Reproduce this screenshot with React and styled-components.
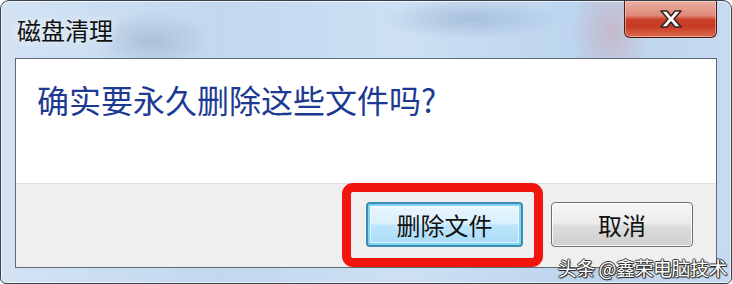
import styled, { createGlobalStyle } from "styled-components";

const GlobalStyle = createGlobalStyle`
  html, body {
    margin: 0;
    padding: 0;
    background: #ffffff;
  }
  body {
    font-family: "Noto Sans CJK SC", "Noto Sans", sans-serif;
  }
`;

const Window = styled.div`
  position: relative;
  width: 732px;
  height: 284px;
  box-sizing: border-box;
  border: 1px solid #38424e;
  border-radius: 9px 9px 6px 6px;
  overflow: hidden;
  display: flex;
  flex-direction: column;
  background:
    radial-gradient(ellipse 60px 30px at 150px 40px, rgba(120, 140, 170, 0.35), transparent),
    radial-gradient(ellipse 90px 20px at 470px 18px, rgba(110, 140, 180, 0.35), transparent),
    radial-gradient(ellipse 40px 60px at 610px 30px, rgba(210, 120, 120, 0.3), transparent),
    linear-gradient(to right, #d3e3f4 0%, #c2d8ef 30%, #cde0f3 55%, #bcd4ee 80%, #c6daf0 100%);
  box-shadow: inset 0 0 0 1px rgba(255, 255, 255, 0.65);
`;

const TitleBar = styled.div`
  height: 57px;
  display: flex;
  align-items: flex-start;
  justify-content: space-between;
  padding-left: 16px;
  flex-shrink: 0;
`;

const Title = styled.div`
  padding-top: 15px;
  font-size: 24px;
  line-height: 28px;
  color: #101010;
  text-shadow: 0 0 8px rgba(255, 255, 255, 0.9);
`;

const CloseButton = styled.div`
  width: 93px;
  height: 37px;
  margin-right: 14px;
  box-sizing: border-box;
  border: 1px solid #4a1c18;
  border-top: none;
  border-radius: 0 0 6px 6px;
  display: flex;
  align-items: center;
  justify-content: center;
  background: linear-gradient(
    to bottom,
    #eab0a4 0%,
    #df8a78 40%,
    #c9402a 52%,
    #c53a22 70%,
    #dc6a4f 100%
  );
  box-shadow: inset 0 0 0 1px rgba(255, 220, 210, 0.5);
`;

const Client = styled.div`
  margin: 0 14px;
  height: 210px;
  box-sizing: border-box;
  border: 1px solid #5c6a78;
  display: flex;
  flex-direction: column;
  background: #ffffff;
`;

const Content = styled.div`
  height: 124px;
  padding: 22px 0 0 21px;
  box-sizing: border-box;
`;

const Message = styled.div`
  font-size: 32px;
  line-height: 37px;
  color: #1c3a92;
`;

const Footer = styled.div`
  flex: 1;
  background: #efefef;
  border-top: 1px solid #dedede;
  display: flex;
  justify-content: flex-end;
  align-items: flex-start;
  gap: 28px;
  padding: 18px 23px 0 0;
`;

const Marked = styled.div`
  position: relative;
`;

const Highlight = styled.div`
  position: absolute;
  left: -24px;
  right: -20px;
  top: -19px;
  bottom: -20px;
  border: 9px solid #f2150d;
  border-radius: 11px;
  pointer-events: none;
`;

const Button = styled.div`
  width: ${(p) => p.$width}px;
  height: 45px;
  box-sizing: border-box;
  border-radius: 4px;
  display: flex;
  align-items: center;
  justify-content: center;
  font-size: 24px;
  color: #111111;
  border: ${(p) => (p.$primary ? "2px solid #3a8cb4" : "1px solid #707070")};
  background: ${(p) =>
    p.$primary
      ? "linear-gradient(to bottom, #eaf6fd 0%, #d9f0fc 48%, #bee6fd 52%, #a7d9f5 100%)"
      : "linear-gradient(to bottom, #f6f6f6 0%, #ebebeb 48%, #dddddd 52%, #cfcfcf 100%)"};
  box-shadow: ${(p) =>
    p.$primary
      ? "inset 0 0 0 2px #7fd4f0, inset 0 0 0 3px rgba(255,255,255,0.6)"
      : "inset 0 0 0 1px rgba(255,255,255,0.8)"};
`;

const Watermark = styled.div`
  position: absolute;
  right: 4px;
  bottom: 3px;
  font-size: 19px;
  line-height: 24px;
  color: #ffffff;
  letter-spacing: -0.5px;
  text-shadow:
    1px 0 0 #333, -1px 0 0 #333, 0 1px 0 #333, 0 -1px 0 #333,
    1px 1px 1px #333;
`;

const CloseIcon = () => (
  <svg width="26" height="20" viewBox="0 0 26 20">
    <path
      d="M3 2 H9 L13 7 L17 2 H23 L16 10 L23 18 H17 L13 13 L9 18 H3 L10 10 Z"
      fill="#ffffff"
      stroke="#3a2420"
      strokeWidth="1.6"
      strokeLinejoin="round"
    />
  </svg>
);

export default function App() {
  return (
    <>
      <GlobalStyle />
      <Window>
        <TitleBar>
          <Title>磁盘清理</Title>
          <CloseButton>
            <CloseIcon />
          </CloseButton>
        </TitleBar>
        <Client>
          <Content>
            <Message>确实要永久删除这些文件吗?</Message>
          </Content>
          <Footer>
            <Marked>
              <Button $primary $width={157}>删除文件</Button>
              <Highlight />
            </Marked>
            <Button $width={142}>取消</Button>
          </Footer>
        </Client>
        <Watermark>头条 @鑫荣电脑技术</Watermark>
      </Window>
    </>
  );
}
